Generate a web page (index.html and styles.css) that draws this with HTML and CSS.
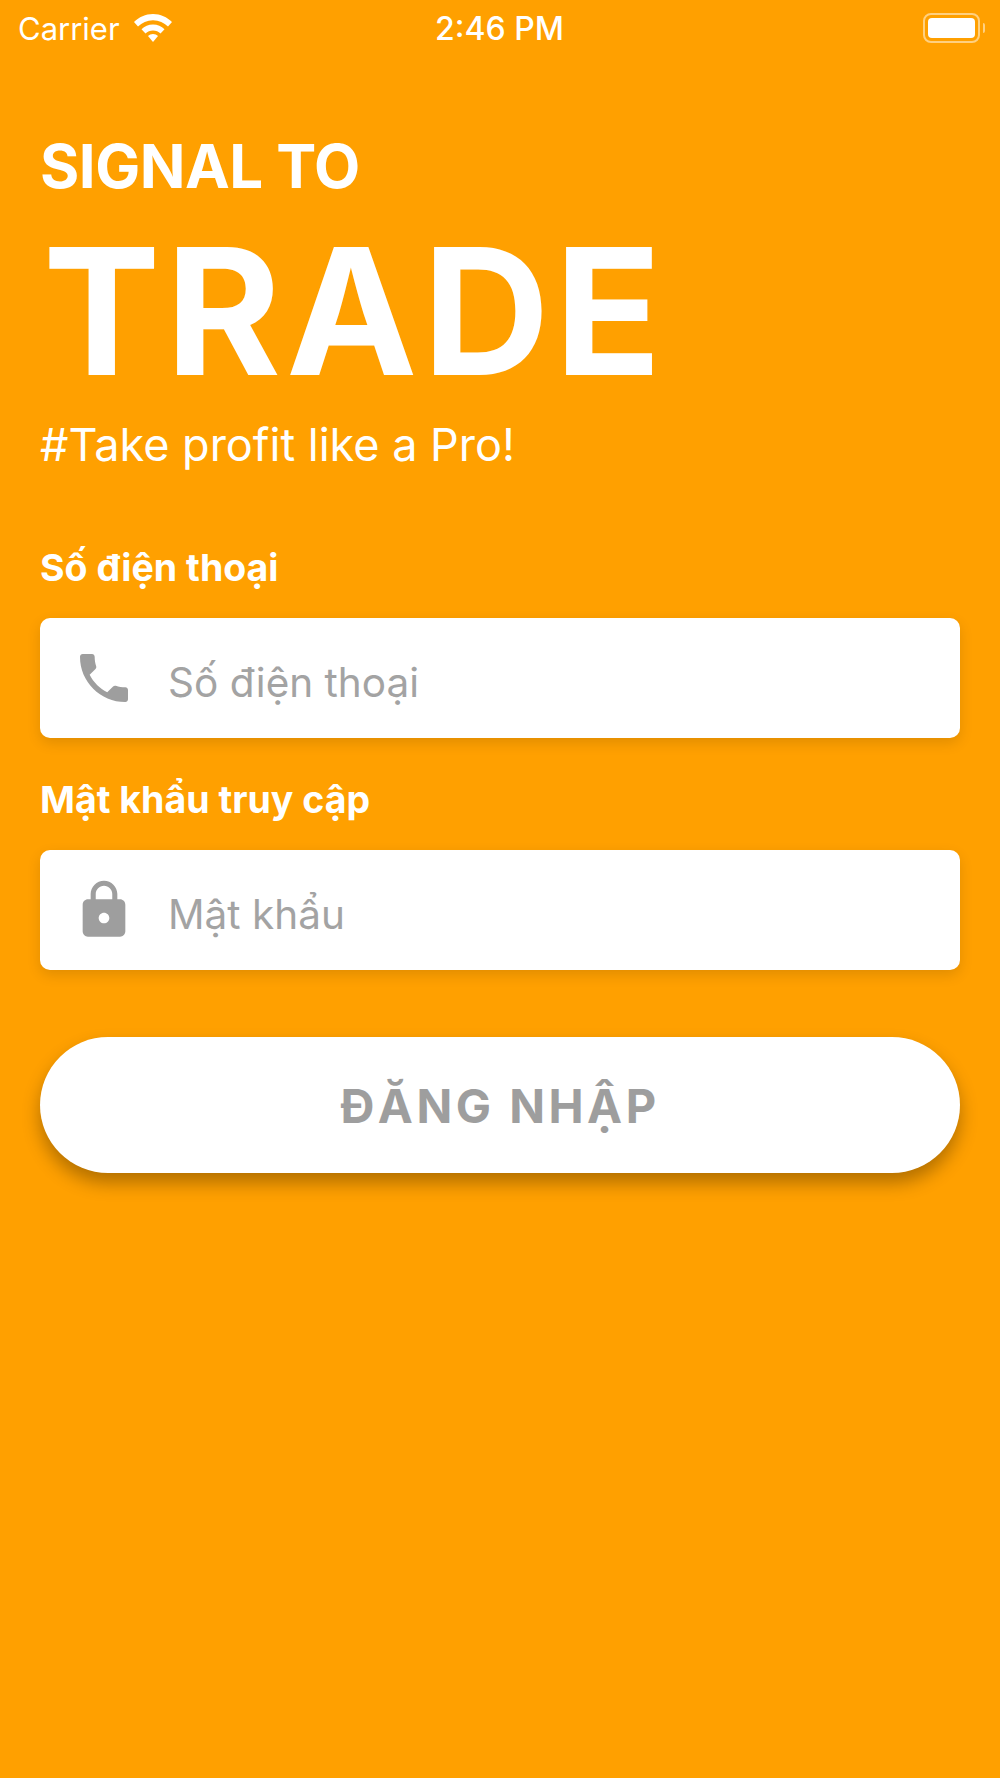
FILE: index.html
```html
<!DOCTYPE html>
<html lang="vi">
<head>
    <meta charset="UTF-8">
    <meta name="viewport" content="width=device-width, initial-scale=1.0">
    <link rel="stylesheet" href="styles.css">
    <title>Signal To Trade</title>
</head>
<body>
    <div class="status-bar">
        <div class="status-left">
            <span>Carrier</span>
            <svg class="wifi-icon" viewBox="0 0 40 30" width="40" height="30">
                <path fill="#fff" d="M20 1C12.500 1 6 4 1 9l4 4.500C9 9.500 14 7.200 20 7.200s11 2.300 15 6.300l4-4.500C34 4 27.500 1 20 1z"/>
                <path fill="#fff" d="M20 11.500c-4.500 0-8.500 1.800-11.500 4.800l4 4.300c2-2 4.500-3 7.500-3s5.500 1 7.500 3l4-4.300c-3-3-7-4.800-11.500-4.800z"/>
                <path fill="#fff" d="M20 21c-2 0-3.700.8-5 2l5 6 5-6c-1.300-1.200-3-2-5-2z"/>
            </svg>
        </div>
        <div class="status-time">2:46 PM</div>
        <div class="battery">
            <div class="battery-body"><div class="battery-fill"></div></div>
            <div class="battery-cap"></div>
        </div>
    </div>

    <div class="content">
        <div class="brand-small">SIGNAL TO</div>
        <div class="brand-big">TRADE</div>
        <div class="slogan">#Take profit like a Pro!</div>

        <div class="field-label first">Số điện thoại</div>
        <div class="input-box">
            <div class="input-icon">
                <svg viewBox="0 0 24 24" width="64" height="64">
                    <path fill="#9e9e9e" d="M6.620 10.790c1.440 2.830 3.760 5.140 6.590 6.590l2.200-2.200c.27-.27.67-.36 1.020-.24 1.120.37 2.330.57 3.570.57.550 0 1 .45 1 1V20c0 .550-.45 1-1 1-9.390 0-17-7.610-17-17 0-.550.450-1 1-1h3.500c.55 0 1 .45 1 1 0 1.250.2 2.450.57 3.570.11.350.03.740-.25 1.020l-2.200 2.200z"/>
                </svg>
            </div>
            <span class="placeholder">Số điện thoại</span>
        </div>

        <div class="field-label">Mật khẩu truy cập</div>
        <div class="input-box">
            <div class="input-icon">
                <svg viewBox="0 0 24 24" width="64" height="64">
                    <path fill="#9e9e9e" d="M18 8h-1V6c0-2.760-2.240-5-5-5S7 3.240 7 6v2H6c-1.100 0-2 .9-2 2v10c0 1.100.9 2 2 2h12c1.100 0 2-.9 2-2V10c0-1.100-.9-2-2-2zm-6 9c-1.100 0-2-.9-2-2s.9-2 2-2 2 .9 2 2-.9 2-2 2zM15.100 8H8.900V6c0-1.710 1.390-3.100 3.100-3.100s3.100 1.390 3.100 3.100v2z"/>
                </svg>
            </div>
            <span class="placeholder">Mật khẩu</span>
        </div>

        <div class="login-button">ĐĂNG NHẬP</div>
    </div>
</body>
</html>
```

FILE: styles.css
```css
* {
    box-sizing: border-box;
    font-family: Inter, "Noto Sans", sans-serif;
}

body {
    margin: 0;
    height: 1778px;
    background-color: #ffa000;
    color: #fff;
    overflow: hidden;
}

.status-bar {
    display: grid;
    grid-template-columns: 1fr auto 1fr;
    align-items: center;
    height: 56px;
    padding: 0 15px 0 18px;
}

.status-left {
    display: flex;
    align-items: center;
    gap: 13px;
    font-size: 31px;
}

.status-time {
    font-size: 32px;
    font-weight: 500;
    margin-right: 4px;
}

.battery {
    display: flex;
    align-items: center;
    justify-content: flex-end;
    gap: 3px;
}

.battery-body {
    width: 57px;
    height: 30px;
    padding: 3px;
    border: 2px solid rgba(255, 255, 255, 0.5);
    border-radius: 8px;
}

.battery-fill {
    width: 100%;
    height: 100%;
    background-color: #fff;
    border-radius: 4px;
}

.battery-cap {
    width: 2px;
    height: 10px;
    background-color: rgba(255, 255, 255, 0.5);
    border-radius: 0 2px 2px 0;
}

.content {
    display: flex;
    flex-direction: column;
    padding: 74px 40px 0;
}

.brand-small {
    font-size: 60px;
    font-weight: 700;
    line-height: 72px;
    letter-spacing: -0.5px;
}

.brand-big {
    font-size: 176px;
    font-weight: 700;
    line-height: 214px;
    letter-spacing: 5px;
    margin-top: 2px;
    margin-left: 3px;
}

.slogan {
    font-size: 45px;
    line-height: 52px;
    margin-top: 1px;
}

.field-label {
    font-size: 37.500px;
    font-weight: 700;
    line-height: 44px;
    margin: 40px 0 28px;
}

.field-label.first {
    margin-top: 75px;
}

.input-box {
    display: flex;
    align-items: center;
    height: 120px;
    background-color: #fff;
    border-radius: 10px;
    box-shadow: 0 5px 14px rgba(0, 0, 0, 0.12);
}

.input-icon {
    display: flex;
    justify-content: center;
    width: 128px;
}

.placeholder {
    font-size: 40.500px;
    padding-top: 9px;
    color: #a3a3a3;
}

.login-button {
    display: flex;
    align-items: center;
    justify-content: center;
    height: 136px;
    margin-top: 67px;
    background-color: #fff;
    border-radius: 68px;
    box-shadow: 0 10px 18px rgba(0, 0, 0, 0.3);
    font-size: 47px;
    font-weight: 700;
    letter-spacing: 3.500px;
    color: #9e9e9e;
}
```
